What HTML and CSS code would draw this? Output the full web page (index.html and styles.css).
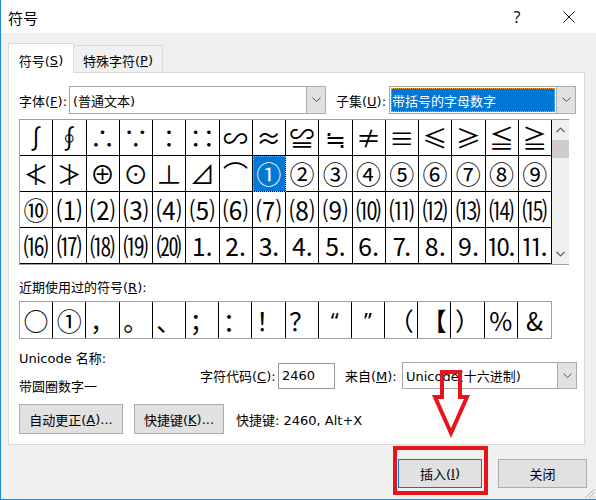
FILE: index.html
```html
<!DOCTYPE html>
<html lang="zh-CN">
<head>
<meta charset="utf-8">
<title>符号</title>
<link rel="stylesheet" href="styles.css">
</head>
<body>
<div class="window">
  <div class="titlebar">
    <span class="title">符号</span>
    <span class="help">?</span>
    <span class="close-x">
      <svg width="12" height="12" viewBox="0 0 12 12"><path d="M0.5 0.5 L11.5 11.5 M11.5 0.5 L0.5 11.5" stroke="#111" stroke-width="1" fill="none"/></svg>
    </span>
  </div>
  <div class="main">
    <div class="tabs">
      <div class="tab active">符号(<u>S</u>)</div>
      <div class="tab inactive">特殊字符(<u>P</u>)</div>
    </div>
    <div class="panel">
      <div class="fontrow">
        <span class="lbl lbl-font">字体(<u>F</u>):</span>
        <div class="combo combo-font">
          <span class="combo-text">(普通文本)</span>
          <span class="combo-btn"><svg width="9" height="6" viewBox="0 0 9 6"><path d="M0.5 0.5 L4.5 4.5 L8.5 0.5" stroke="#555" fill="none"/></svg></span>
        </div>
        <span class="lbl lbl-subset">子集(<u>U</u>):</span>
        <div class="combo combo-subset">
          <span class="combo-text"><span class="highlight">带括号的字母数字</span></span>
          <span class="combo-btn"><svg width="9" height="6" viewBox="0 0 9 6"><path d="M0.5 0.5 L4.5 4.5 L8.5 0.5" stroke="#555" fill="none"/></svg></span>
        </div>
      </div>

      <div class="charmap">
        <div class="cells">
          <span class="cell">∫</span><span class="cell">∮</span><span class="cell">∴</span><span class="cell">∵</span><span class="cell">∶</span><span class="cell">∷</span><span class="cell">∽</span><span class="cell">≈</span><span class="cell">≌</span><span class="cell">≒</span><span class="cell">≠</span><span class="cell">≡</span><span class="cell">≤</span><span class="cell">≥</span><span class="cell">≦</span><span class="cell">≧</span>
          <span class="cell">≮</span><span class="cell">≯</span><span class="cell">⊕</span><span class="cell">⊙</span><span class="cell">⊥</span><span class="cell">⊿</span><span class="cell">⌒</span><span class="cell sel">①</span><span class="cell">②</span><span class="cell">③</span><span class="cell">④</span><span class="cell">⑤</span><span class="cell">⑥</span><span class="cell">⑦</span><span class="cell">⑧</span><span class="cell">⑨</span>
          <span class="cell">⑩</span><span class="cell">⑴</span><span class="cell">⑵</span><span class="cell">⑶</span><span class="cell">⑷</span><span class="cell">⑸</span><span class="cell">⑹</span><span class="cell">⑺</span><span class="cell">⑻</span><span class="cell">⑼</span><span class="cell">⑽</span><span class="cell">⑾</span><span class="cell">⑿</span><span class="cell">⒀</span><span class="cell">⒁</span><span class="cell">⒂</span>
          <span class="cell">⒃</span><span class="cell">⒄</span><span class="cell">⒅</span><span class="cell">⒆</span><span class="cell">⒇</span><span class="cell">⒈</span><span class="cell">⒉</span><span class="cell">⒊</span><span class="cell">⒋</span><span class="cell">⒌</span><span class="cell">⒍</span><span class="cell">⒎</span><span class="cell">⒏</span><span class="cell">⒐</span><span class="cell">⒑</span><span class="cell">⒒</span>
        </div>
        <div class="scrollbar">
          <span class="sb-btn"><svg width="9" height="6" viewBox="0 0 9 6"><path d="M0.5 5 L4.5 1 L8.5 5" stroke="#606060" stroke-width="1.2" fill="none"/></svg></span>
          <span class="sb-thumb"></span>
          <span class="sb-track"></span>
          <span class="sb-btn"><svg width="9" height="6" viewBox="0 0 9 6"><path d="M0.5 1 L4.5 5 L8.5 1" stroke="#606060" stroke-width="1.2" fill="none"/></svg></span>
        </div>
      </div>

      <div class="recent-label">近期使用过的符号(<u>R</u>):</div>
      <div class="recent">
        <span class="rcell">○</span><span class="rcell">①</span><span class="rcell">，</span><span class="rcell">。</span><span class="rcell">、</span><span class="rcell">；</span><span class="rcell">：</span><span class="rcell">！</span><span class="rcell">？</span><span class="rcell quote">“</span><span class="rcell quote">”</span><span class="rcell">（</span><span class="rcell">【</span><span class="rcell">）</span><span class="rcell">%</span><span class="rcell">&amp;</span>
      </div>

      <div class="info">
        <div class="names">
          <div>Unicode 名称:</div>
          <div>带圆圈数字一</div>
        </div>
        <div class="code">
          <span class="code-lbl">字符代码(<u>C</u>):</span>
          <span class="code-input">2460</span>
          <span class="from-lbl">来自(<u>M</u>):</span>
          <div class="combo combo-from">
            <span class="combo-text">Unicode(十六进制)</span>
            <span class="combo-btn"><svg width="9" height="6" viewBox="0 0 9 6"><path d="M0.5 0.5 L4.5 4.5 L8.5 0.5" stroke="#555" fill="none"/></svg></span>
          </div>
        </div>
      </div>

      <div class="actions">
        <span class="btn btn-auto">自动更正(<u>A</u>)...</span>
        <span class="btn btn-key">快捷键(<u>K</u>)...</span>
        <span class="shortcut">快捷键: 2460, Alt+X</span>
      </div>
    </div>

    <div class="footer">
      <span class="btn btn-insert">插入(<u>I</u>)</span>
      <span class="btn btn-close">关闭</span>
    </div>
  </div>

  <div class="mark-box"></div>
  <svg class="mark-arrow" width="46" height="74" viewBox="0 0 46 74">
    <polygon points="13,6 31,6 31,31 38,31 22,67 6,31 13,31" fill="none" stroke="#e8141c" stroke-width="4" stroke-linejoin="miter"/>
  </svg>
  <svg class="grip" width="10" height="10" viewBox="0 0 10 10">
    <path d="M9.5 1 L1 9.5 M9.5 4.5 L4.5 9.5 M9.5 8 L8 9.5" stroke="#a8a8a8" fill="none"/>
  </svg>
</div>
</body>
</html>
```

FILE: styles.css
```css
* {
  box-sizing: border-box;
}

html, body {
  margin: 0;
  padding: 0;
}

body {
  width: 596px;
  height: 500px;
  overflow: hidden;
  background: #f0f0f0;
  font-family: "DejaVu Sans", "Noto Sans CJK SC", sans-serif;
  font-size: 13px;
  color: #000;
}

u {
  text-decoration: underline;
  text-underline-offset: 1px;
}

.window {
  position: relative;
  width: 596px;
  height: 500px;
  background: #f0f0f0;
  border-left: 1px solid #1c86e0;
  border-bottom: 1px solid #1c86e0;
}

/* title bar */
.titlebar {
  height: 33px;
  background: #fff;
  display: flex;
  align-items: center;
  padding-left: 7px;
}

.title {
  flex: 1;
  font-family: "Noto Sans CJK SC", sans-serif;
  font-size: 15px;
  padding-top: 2px;
}

.help {
  width: 20px;
  text-align: center;
  font-family: "Noto Sans", sans-serif;
  font-size: 16px;
  padding-top: 1px;
  color: #111;
}

.close-x {
  display: flex;
  margin-left: 36px;
  margin-right: 21px;
}

/* body */
.main {
  padding: 10px 0 0 7px;
}

.tabs {
  display: flex;
  align-items: flex-end;
  height: 29px;
}

.tab {
  display: flex;
  align-items: center;
  justify-content: center;
  padding-top: 4px;
  border: 1px solid #d9d9d9;
  border-bottom: none;
}

.tab.active {
  width: 66px;
  height: 30px;
  margin-bottom: -1px;
  background: #fff;
  position: relative;
  z-index: 1;
}

.tab.inactive {
  width: 89px;
  height: 27px;
  border-left: none;
  background: #f0f0f0;
  padding-top: 2px;
}

.panel {
  width: 577px;
  height: 373px;
  background: #fff;
  border: 1px solid #d9d9d9;
  padding: 13px 0 0 10px;
}

/* font / subset row */
.fontrow {
  display: flex;
  align-items: center;
  height: 28px;
}

.lbl-font {
  width: 50px;
  white-space: nowrap;
}

.lbl-subset {
  width: 53px;
  margin-left: 10px;
  white-space: nowrap;
}

.combo {
  display: flex;
  height: 28px;
  background: #fff;
  border: 1px solid #a6a6a6;
}

.combo-font {
  width: 257px;
}

.combo-subset {
  width: 187px;
}

.combo-text {
  flex: 1;
  display: flex;
  align-items: center;
  padding-left: 3px;
  white-space: nowrap;
  overflow: hidden;
}

.combo-subset .combo-text {
  padding: 1px;
}

.highlight {
  flex: 1;
  height: 100%;
  display: flex;
  align-items: center;
  padding-left: 1px;
  background: #0078d7;
  color: #fff;
  outline: 1px dotted #f2a23a;
  outline-offset: -1px;
}

.combo-btn {
  width: 20px;
  margin: -1px -1px -1px 0;
  display: flex;
  align-items: center;
  justify-content: center;
  background: #e1e1e1;
  border: 1px solid #adadad;
}

/* character map */
.charmap {
  display: flex;
  width: 550px;
  height: 146px;
  margin-top: 5px;
  border: 1px solid #a0a0a0;
  border-right: none;
}

.cells {
  width: 532px;
  display: grid;
  grid-template-columns: repeat(16, 1fr);
  grid-template-rows: repeat(4, 1fr);
}

.cell,
.rcell {
  display: flex;
  align-items: center;
  justify-content: center;
  font-family: "Noto Sans CJK SC", sans-serif;
  font-size: 25px;
  line-height: 1;
  border-right: 1px solid #000;
}

.rcell.quote {
  font-family: "Noto Sans", sans-serif;
  font-size: 22px;
}

.cell {
  border-bottom: 1px solid #000;
}

.cell.sel {
  background: #0078d7;
  color: #fff;
  outline: 1px dotted #f2a23a;
  outline-offset: -1px;
}

.scrollbar {
  width: 17px;
  background: #f0f0f0;
  display: flex;
  flex-direction: column;
}

.sb-btn {
  height: 20px;
  display: flex;
  align-items: center;
  justify-content: center;
}

.sb-thumb {
  height: 18px;
  background: #cdcdcd;
}

.sb-track {
  flex: 1;
}

/* recent */
.recent-label {
  margin-top: 14px;
  line-height: 18px;
}

.recent {
  width: 533px;
  height: 38px;
  margin-top: 4px;
  border: 1px solid #a0a0a0;
  display: grid;
  grid-template-columns: repeat(16, 1fr);
}

.rcell:last-child {
  border-right: none;
}

/* info */
.info {
  display: flex;
  margin-top: 6px;
  height: 56px;
}

.names {
  width: 181px;
  line-height: 28px;
}

.code {
  display: flex;
  align-items: center;
  height: 27px;
  margin-top: 17px;
}

.code-lbl {
  width: 78px;
  white-space: nowrap;
}

.code-input {
  width: 57px;
  height: 26px;
  display: flex;
  align-items: center;
  padding-left: 3px;
  border: 1px solid #9a9a9a;
}

.from-lbl {
  width: 57px;
  margin-left: 10px;
  white-space: nowrap;
}

.combo-from {
  width: 175px;
  height: 27px;
}

/* buttons */
.actions {
  display: flex;
  align-items: center;
  margin-top: 3px;
}

.btn {
  height: 30px;
  display: flex;
  align-items: center;
  justify-content: center;
  white-space: nowrap;
  background: #e1e1e1;
  border: 1px solid #adadad;
}

.btn-auto {
  width: 104px;
}

.btn-key {
  width: 90px;
  margin-left: 11px;
}

.shortcut {
  margin-left: 12px;
  white-space: nowrap;
}

.footer {
  display: flex;
  justify-content: flex-end;
  gap: 16px;
  margin-top: 14px;
  padding-right: 9px;
}

.btn-insert {
  width: 84px;
  height: 29px;
  border-color: #0078d7;
}

.btn-close {
  width: 89px;
  height: 29px;
}

/* overlays: annotation marks drawn on top */
.mark-box {
  position: absolute;
  left: 392px;
  top: 446px;
  width: 95px;
  height: 49px;
  border: 4px solid #e8141c;
}

.mark-arrow {
  position: absolute;
  left: 428px;
  top: 366px;
}

.grip {
  position: absolute;
  right: 1px;
  bottom: 1px;
}
```
